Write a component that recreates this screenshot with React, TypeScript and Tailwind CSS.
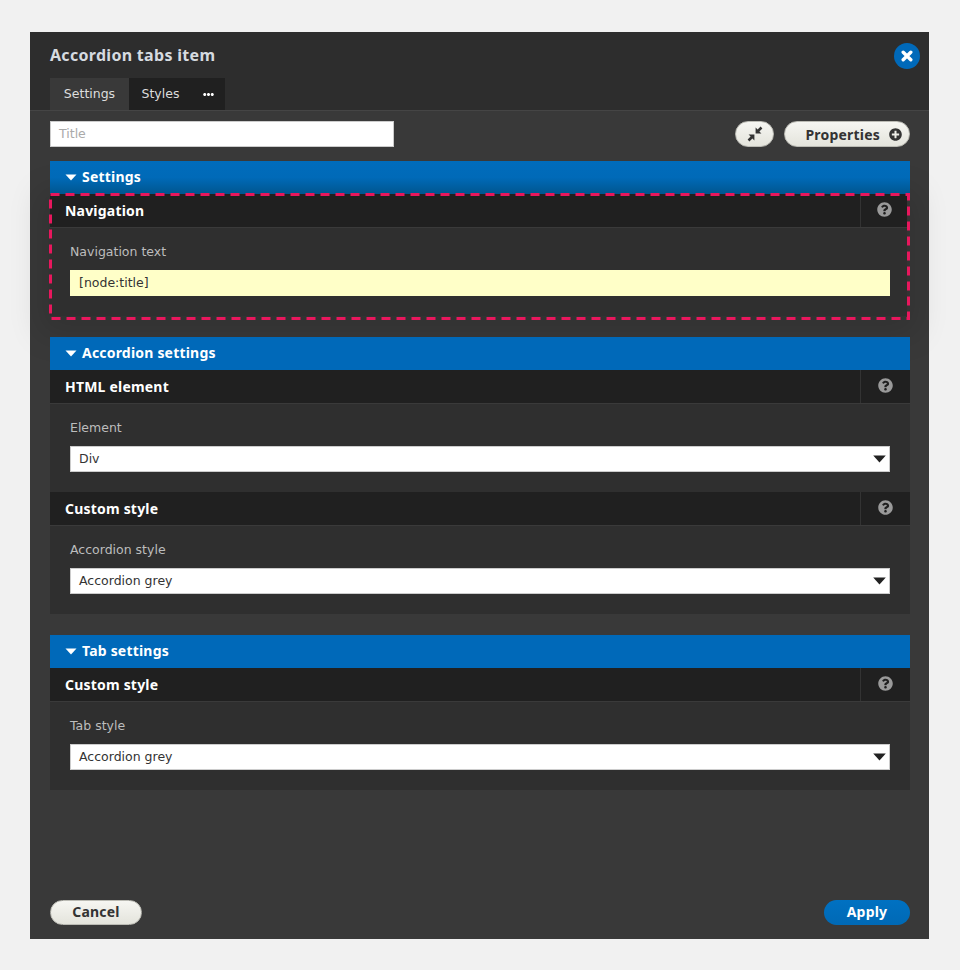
import React from "react";
import { FaQuestionCircle, FaPlusCircle, FaEllipsisH } from "react-icons/fa";

const bold = "font-['Noto_Sans',sans-serif] font-bold";

function Caret({ className }: { className: string }) {
  return (
    <svg viewBox="0 0 12 7" className={className} aria-hidden="true">
      <path d="M0.5 0.5h11L6 6.5z" fill="currentColor" />
    </svg>
  );
}

function GroupHeader({ title, gradient }: { title: string; gradient?: boolean }) {
  return (
    <div
      className={`relative z-10 flex h-[33px] items-center pb-[2px] pl-[15px] text-[14px] tracking-[0.2px] text-white ${bold} ${
        gradient ? "bg-gradient-to-b from-[#006cbc] via-[#006ab8] to-[#00568f]" : "bg-[#0069b9]"
      }`}
    >
      <Caret className="mr-[5px] mt-[1px] h-[7px] w-[12px]" />
      {title}
    </div>
  );
}

function SubHeader({ title, helpWidth = "w-[50px]" }: { title: string; helpWidth?: string }) {
  return (
    <div className="flex h-[34px] items-center justify-between border-b border-[#3a3a3a] bg-[#202020]">
      <span className={`pl-[15px] text-[14px] tracking-[0.2px] text-white ${bold}`}>{title}</span>
      <span className={`flex h-full items-center justify-center border-l border-[#333333] pb-[2px] ${helpWidth}`}>
        <FaQuestionCircle className="text-[15px] text-[#9a9a9a]" />
      </span>
    </div>
  );
}

function SelectField({ label, value }: { label: string; value: string }) {
  return (
    <div className="px-5 pb-5 pt-[15px]">
      <div className="mb-[10px] h-[17px] text-[12.5px] leading-[17px] text-[#bdbdbd]">{label}</div>
      <div className="flex h-[26px] items-center justify-between border border-[#cccccc] bg-white pl-2 pr-[2px] text-[12.5px] text-[#333333]">
        {value}
        <Caret className="h-[8px] w-[15px] text-[#222222]" />
      </div>
    </div>
  );
}

export default function App() {
  return (
    <div className="h-[970px] w-[960px] bg-[#f1f1f1] pl-[30px] pt-[32px] font-['DejaVu_Sans',sans-serif]">
      <div className="flex h-[907px] w-[899px] flex-col bg-[#393939]">
        <div className="relative h-[79px] border-b border-[#454545] bg-[#2d2d2d]">
          <div className={`pl-5 pt-[12px] text-[16px] leading-[22px] tracking-[0.3px] text-[#d6dbe0] ${bold}`}>
            Accordion tabs item
          </div>
          <button className="absolute right-[9px] top-[11px] flex h-[26px] w-[26px] items-center justify-center rounded-full bg-[#0069b9] text-white">
            <svg viewBox="0 0 12 12" className="h-[12px] w-[12px]" aria-hidden="true">
              <path d="M2.2 2.2l7.6 7.6M9.8 2.2l-7.6 7.6" stroke="currentColor" strokeWidth="3.4" strokeLinecap="round" />
            </svg>
          </button>
          <div className="ml-5 mt-[12px] flex h-[32px] w-[175px] bg-[#202020] text-[12.5px] text-[#dddddd]">
            <span className="flex w-[79px] items-center justify-center bg-[#393939]">Settings</span>
            <span className="flex w-[63px] items-center justify-center">Styles</span>
            <span className="flex flex-1 items-center justify-center text-white">
              <FaEllipsisH className="text-[11px]" />
            </span>
          </div>
        </div>

        <div className="relative z-10 flex h-[50px] items-start justify-between pl-5 pr-[19px] pt-[10px]">
          <div className="flex h-[26px] w-[344px] items-center border border-[#cccccc] bg-white pl-2 text-[12.5px] text-[#aaaaaa]">
            Title
          </div>
          <div className="flex gap-[10px]">
            <button className="flex h-[26px] w-[39px] items-center justify-center rounded-full border border-[#bbbbb4] bg-gradient-to-b from-[#f6f6f2] to-[#e4e4dc] text-[#333333]">
              <svg viewBox="0 0 16 16" className="h-[16px] w-[16px]" aria-hidden="true">
                <path
                  d="M8.6 1.6v5.8h5.8L12.4 5.4l3-3L13.6 0.6l-3 3zM7.4 14.4V8.6H1.6l2 2-3 3 1.8 1.8 3-3z"
                  fill="currentColor"
                />
              </svg>
            </button>
            <button className={`flex h-[26px] w-[126px] items-center justify-end gap-[9px] rounded-full border border-[#bbbbb4] bg-gradient-to-b from-[#f6f6f2] to-[#e4e4dc] pr-[7px] text-[14px] tracking-[0.2px] text-[#333333] ${bold}`}>
              Properties
              <FaPlusCircle className="text-[13px]" />
            </button>
          </div>
        </div>

        <div className="flex flex-1 flex-col pl-5 pr-[19px]">
          <div className="relative">
            <GroupHeader title="Settings" gradient />
            <div className="relative mr-[3px] bg-[#2f2f2f] shadow-[0_8px_30px_10px_rgba(0,0,0,0.13)]">
              <SubHeader title="Navigation" helpWidth="w-[47px]" />
              <div className="pb-5 pl-5 pr-[17px] pt-[15px]">
                <div className="mb-[10px] h-[17px] text-[12.5px] leading-[17px] text-[#bdbdbd]">Navigation text</div>
                <div className="flex h-[26px] items-center bg-[#ffffc8] pl-[9px] text-[12.5px] text-[#333333]">[node:title]</div>
              </div>
            </div>
            <svg className="pointer-events-none absolute -left-px top-[32px] z-20 h-[127px] w-[861px]" viewBox="0 0 861 127" fill="none" aria-hidden="true">
              <rect x="1.5" y="1.5" width="858" height="124" stroke="#e8175d" strokeWidth="3" strokeDasharray="9 6" />
            </svg>
          </div>

          <div className="mt-[21px] bg-[#2f2f2f]">
            <GroupHeader title="Accordion settings" />
            <SubHeader title="HTML element" />
            <SelectField label="Element" value="Div" />
            <SubHeader title="Custom style" />
            <SelectField label="Accordion style" value="Accordion grey" />
          </div>

          <div className="mt-[21px] bg-[#2f2f2f]">
            <GroupHeader title="Tab settings" />
            <SubHeader title="Custom style" />
            <SelectField label="Tab style" value="Accordion grey" />
          </div>

          <div className="mt-auto flex justify-between pb-[14px]">
            <button className={`h-[25px] w-[92px] rounded-full border border-[#bbbbb4] bg-gradient-to-b from-[#f6f6f2] to-[#e4e4dc] pb-[2px] text-[14px] tracking-[0.2px] text-[#333333] ${bold}`}>
              Cancel
            </button>
            <button className={`h-[25px] w-[86px] rounded-full bg-gradient-to-b from-[#0071c2] to-[#0069b5] pb-[2px] text-[14px] tracking-[0.2px] text-white ${bold}`}>
              Apply
            </button>
          </div>
        </div>
      </div>
    </div>
  );
}
